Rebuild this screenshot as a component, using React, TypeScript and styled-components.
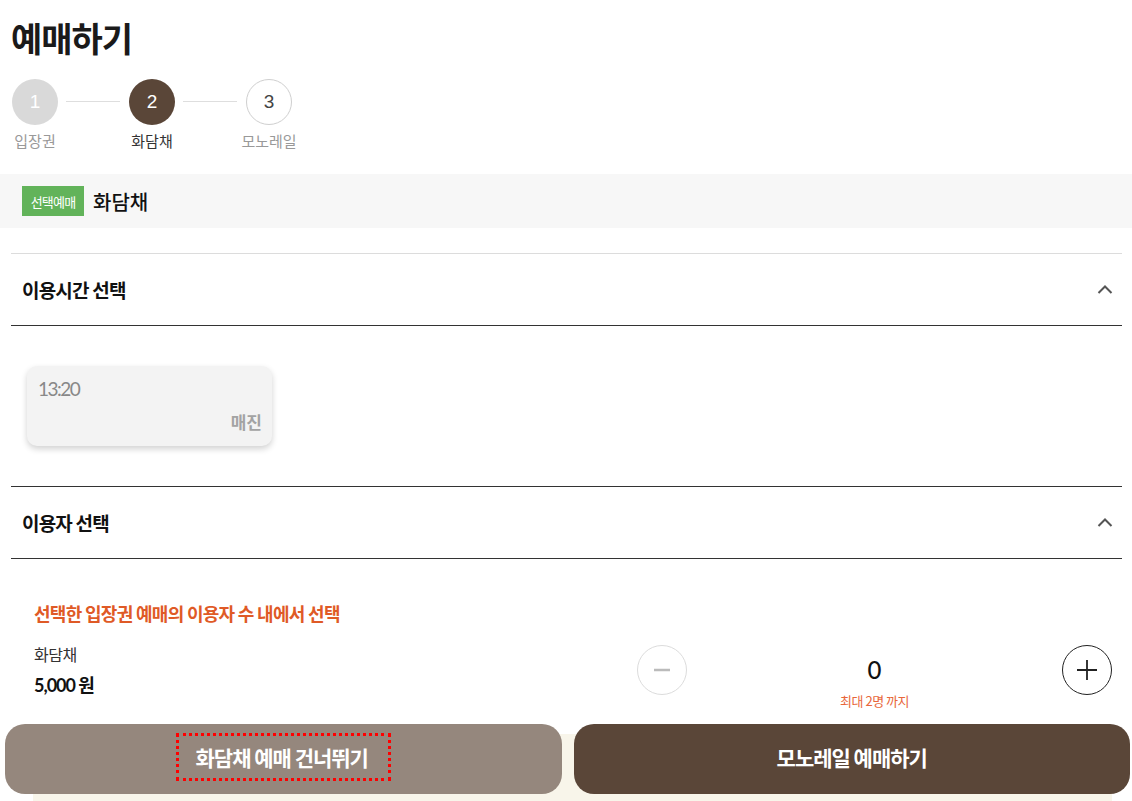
import React from "react";
import styled, { createGlobalStyle } from "styled-components";

const GlobalStyle = createGlobalStyle`
  html, body { margin: 0; padding: 0; background: #fff; }
  body { font-family: "Noto Sans CJK KR", "Noto Sans", sans-serif; color: #1a1a1a; }
  * { box-sizing: border-box; }
`;

const Page = styled.div`
  width: 1132px;
  height: 801px;
  overflow: hidden;
  position: relative;
`;

const Title = styled.h1`
  margin: 0;
  padding: 14px 11px 0;
  font-size: 34px;
  font-weight: 700;
  letter-spacing: -1px;
  line-height: 48px;
  color: #1a1a1a;
`;

const Steps = styled.div`
  display: flex;
  align-items: flex-start;
  padding: 17px 0 0 12px;
  height: 112px;
`;

const Step = styled.div`
  display: flex;
  flex-direction: column;
  align-items: center;
  width: 46px;
`;

const Circle = styled.div<{ $state: "done" | "active" | "todo" }>`
  width: 46px;
  height: 46px;
  border-radius: 50%;
  display: flex;
  align-items: center;
  justify-content: center;
  font-family: "Liberation Sans", Arial, sans-serif;
  font-size: 19px;
  background: ${(p) => (p.$state === "done" ? "#d9d9d9" : p.$state === "active" ? "#5a4638" : "#fff")};
  color: ${(p) => (p.$state === "todo" ? "#444" : "#fff")};
  border: ${(p) => (p.$state === "todo" ? "1px solid #cfcfcf" : "none")};
`;

const StepLabel = styled.div<{ $active?: boolean }>`
  margin-top: 6px;
  white-space: nowrap;
  font-size: 15px;
  line-height: 20px;
  color: ${(p) => (p.$active ? "#333" : "#999")};
`;

const Connector = styled.div`
  width: 54px;
  height: 1px;
  background: #dedede;
  margin: 22px 9px 0 8px;
`;

const Selected = styled.div`
  background: #f7f7f7;
  height: 54px;
  display: flex;
  align-items: center;
  padding-left: 22px;
  gap: 9px;
`;

const Badge = styled.span`
  background: #62b35a;
  color: #fff;
  font-size: 13px;
  letter-spacing: -0.8px;
  height: 30px;
  width: 62px;
  display: flex;
  align-items: center;
  justify-content: center;
`;

const SelectedName = styled.span`
  font-size: 20px;
  font-weight: 500;
  color: #111;
`;

const Sections = styled.div`
  padding: 25px 10px 0 11px;
`;

const SectionHead = styled.div<{ $first?: boolean }>`
  height: 73px;
  border-top: 1px solid ${(p) => (p.$first ? "#dcdcdc" : "#333")};
  border-bottom: 1px solid #333;
  display: flex;
  align-items: center;
  justify-content: space-between;
  padding: 0 8px 0 11px;
`;

const SectionTitle = styled.h2`
  margin: 0;
  font-size: 19px;
  font-weight: 700;
  letter-spacing: -0.8px;
  color: #111;
`;

const TimeArea = styled.div`
  padding: 40px 0 40px 16px;
`;

const TimeCard = styled.div`
  width: 245px;
  height: 80px;
  background: #f3f3f3;
  border-radius: 10px;
  box-shadow: 0 3px 6px rgba(0, 0, 0, 0.18);
  padding: 11px 10px 0 11px;
  display: flex;
  flex-direction: column;
`;

const TimeText = styled.div`
  font-family: Lato, "Noto Sans", sans-serif;
  font-size: 19px;
  letter-spacing: -1.5px;
  color: #888;
  line-height: 24px;
`;

const SoldOut = styled.div`
  align-self: flex-end;
  margin-top: 8px;
  font-size: 17px;
  font-weight: 700;
  color: #a3a3a3;
`;

const UserArea = styled.div`
  padding: 41px 20px 0 34px;
`;

const Notice = styled.p`
  margin: 0;
  font-size: 18px;
  font-weight: 700;
  letter-spacing: -0.7px;
  color: #df5a26;
`;

const Row = styled.div`
  display: flex;
  align-items: flex-start;
  margin-top: 13px;
`;

const Info = styled.div`
  flex: 1;
  padding-top: 3px;
`;

const ItemName = styled.div`
  font-size: 16px;
  color: #333;
  letter-spacing: -0.5px;
`;

const Price = styled.div`
  margin-top: 5px;
  font-family: Lato, "Noto Sans CJK KR", sans-serif;
  font-size: 18px;
  font-weight: 700;
  letter-spacing: -1px;
  color: #111;
`;

const Counter = styled.div`
  display: flex;
  align-items: flex-start;
  width: 475px;
  margin-top: 6px;
`;

const RoundBtn = styled.button<{ $enabled?: boolean }>`
  width: 50px;
  height: 50px;
  border-radius: 50%;
  background: #fff;
  border: 1px solid ${(p) => (p.$enabled ? "#222" : "#dcdcdc")};
  display: flex;
  align-items: center;
  justify-content: center;
  padding: 0;
  flex-shrink: 0;
`;

const CountBox = styled.div`
  flex: 1;
  display: flex;
  flex-direction: column;
  align-items: center;
  padding-top: 10px;
`;

const Count = styled.div`
  font-family: Lato, sans-serif;
  font-size: 24px;
  font-weight: 500;
  line-height: 30px;
  color: #111;
`;

const Max = styled.div`
  margin-top: 7px;
  font-size: 13px;
  line-height: 18px;
  letter-spacing: -0.5px;
  color: #e8663a;
`;

const CreamNote = styled.div`
  margin: 24px 20px 0 33px;
  height: 80px;
  background: #f8f5ea;
`;

const BottomBar = styled.div`
  position: absolute;
  left: 5px;
  right: 2px;
  top: 724px;
  display: flex;
  gap: 12px;
`;

const ActionBtn = styled.button<{ $primary?: boolean }>`
  flex: 1;
  height: 70px;
  border: none;
  border-radius: 20px;
  background: ${(p) => (p.$primary ? "#5a4638" : "#95877d")};
  color: #fff;
  font-family: "Noto Sans CJK KR", sans-serif;
  font-size: 21px;
  font-weight: 700;
  letter-spacing: -1px;
  display: flex;
  align-items: center;
  justify-content: center;
  padding: 0 0 4px;
`;

const FocusRing = styled.span`
  outline: 3px dotted #f00;
  padding: 6px 20px 6px 17px;
`;

const Chevron = () => (
  <svg width="18" height="18" viewBox="0 0 18 18" fill="none">
    <path d="M2.5 12 L9 5.5 L15.5 12" stroke="#555" strokeWidth="2" />
  </svg>
);

const Minus = () => (
  <svg width="20" height="20" viewBox="0 0 20 20">
    <path d="M2 10 H18" stroke="#bbb" strokeWidth="2.5" />
  </svg>
);

const Plus = () => (
  <svg width="22" height="22" viewBox="0 0 22 22">
    <path d="M1 11 H21 M11 1 V21" stroke="#222" strokeWidth="1.8" />
  </svg>
);

export default function App() {
  return (
    <Page>
      <GlobalStyle />
      <Title>예매하기</Title>
      <Steps>
        <Step>
          <Circle $state="done">1</Circle>
          <StepLabel>입장권</StepLabel>
        </Step>
        <Connector />
        <Step>
          <Circle $state="active">2</Circle>
          <StepLabel $active>화담채</StepLabel>
        </Step>
        <Connector />
        <Step>
          <Circle $state="todo">3</Circle>
          <StepLabel>모노레일</StepLabel>
        </Step>
      </Steps>
      <Selected>
        <Badge>선택예매</Badge>
        <SelectedName>화담채</SelectedName>
      </Selected>
      <Sections>
        <SectionHead $first>
          <SectionTitle>이용시간 선택</SectionTitle>
          <Chevron />
        </SectionHead>
        <TimeArea>
          <TimeCard>
            <TimeText>13:20</TimeText>
            <SoldOut>매진</SoldOut>
          </TimeCard>
        </TimeArea>
        <SectionHead>
          <SectionTitle>이용자 선택</SectionTitle>
          <Chevron />
        </SectionHead>
      </Sections>
      <UserArea>
        <Notice>선택한 입장권 예매의 이용자 수 내에서 선택</Notice>
        <Row>
          <Info>
            <ItemName>화담채</ItemName>
            <Price>5,000 원</Price>
          </Info>
          <Counter>
            <RoundBtn aria-label="minus">
              <Minus />
            </RoundBtn>
            <CountBox>
              <Count>0</Count>
              <Max>최대 2명 까지</Max>
            </CountBox>
            <RoundBtn $enabled aria-label="plus">
              <Plus />
            </RoundBtn>
          </Counter>
        </Row>
      </UserArea>
      <CreamNote />
      <BottomBar>
        <ActionBtn>
          <FocusRing>화담채 예매 건너뛰기</FocusRing>
        </ActionBtn>
        <ActionBtn $primary>모노레일 예매하기</ActionBtn>
      </BottomBar>
    </Page>
  );
}
